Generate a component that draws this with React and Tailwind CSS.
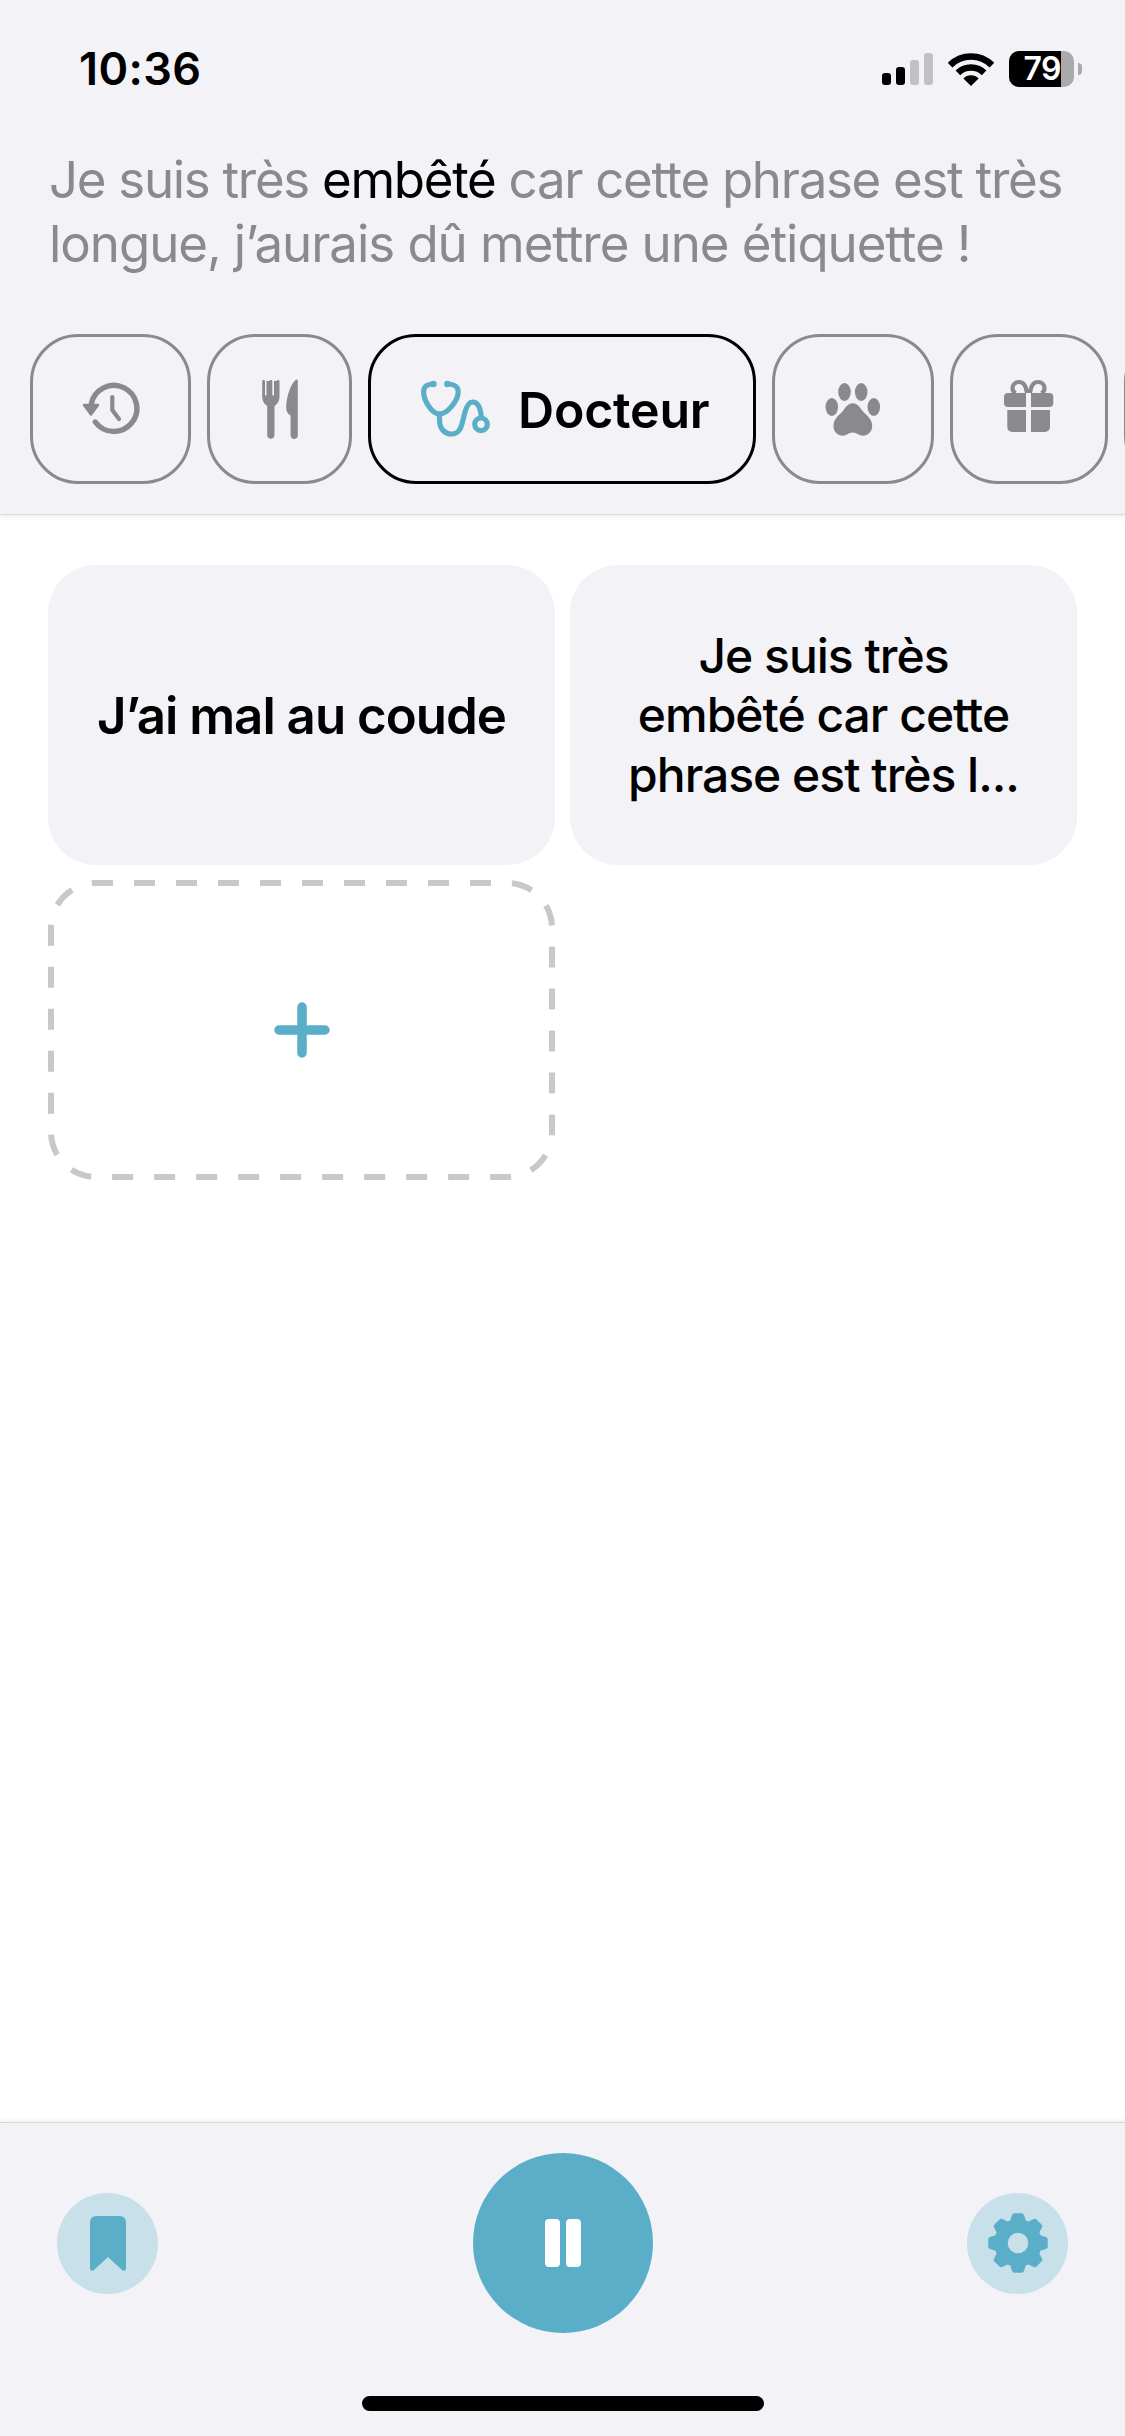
import React from "react";

const gearPoints = () => {
  const pts = [];
  for (let i = 0; i < 8; i++) {
    const a = (i * 45 - 90) * (Math.PI / 180);
    const offsets = [
      [21.5, -0.27],
      [27.5, -0.13],
      [27.5, 0.13],
      [21.5, 0.27],
    ];
    offsets.forEach(([r, d]) => {
      pts.push(
        `${(32 + r * Math.cos(a + d)).toFixed(2)},${(32 + r * Math.sin(a + d)).toFixed(2)}`
      );
    });
  }
  return pts.join(" ");
};

const HistoryIcon = () => (
  <svg width="60" height="60" viewBox="0 0 60 60" fill="none">
    <path
      d="M10.3 25 A23 23 0 1 1 14.3 43"
      stroke="#8a8a8e"
      strokeWidth="5.4"
      strokeLinecap="round"
    />
    <path
      d="M3 26 L17 26 L10 35.5 Z"
      fill="#8a8a8e"
      stroke="#8a8a8e"
      strokeWidth="2.5"
      strokeLinejoin="round"
    />
    <path
      d="M31.3 18 L31.3 31 L38 40"
      stroke="#8a8a8e"
      strokeWidth="4.2"
      strokeLinecap="round"
      strokeLinejoin="round"
    />
  </svg>
);

const ForkIcon = () => (
  <svg width="60" height="60" viewBox="0 0 60 60" fill="#8a8a8e">
    <path d="M12.2 2 C12.2 0.5 15 0.5 15 2 L15 16 C15 17 16.5 17 16.5 16 L16.5 2 L19.5 2 C19.5 0.5 22.3 0.5 22.3 2 L22.3 16 C22.3 17 24 17 24 16 L24 2 L26.7 2 C26.7 0.5 29.5 0.5 29.5 2 L29.5 17 C29.5 22 27.5 25 24.5 27 L24.5 56 C24.5 61 17.2 61 17.2 56 L17.2 27 C14 25 12.2 22 12.2 17 Z" />
    <path d="M47.8 2 L47.8 56.5 C47.8 61 40.6 61 40.6 56.5 L40.6 36.5 C38 35 36.2 32.5 36.2 29 C36.2 19 40 6 45.5 1 C46.5 0 47.8 0.5 47.8 2 Z" />
  </svg>
);

const StethoscopeIcon = () => (
  <svg width="76" height="60" viewBox="0 0 76 60" fill="none" stroke="#5aaec8" strokeWidth="5.2" strokeLinecap="round">
    <path d="M15.3 5 C9 5 5.6 8 5.6 12.5 C5.6 22 14 35 21.5 35 C29 35 40.2 22 40.2 12.5 C40.2 8 36.5 5 29.3 5" />
    <path d="M21.5 35 L21.5 41 C21.5 50 27 55 33.5 55 C44 55 44 43 47 33 C49 26 51 23 54.5 23 C60 23 62.5 28 63.3 38" />
    <circle cx="63" cy="45.3" r="6.3" />
    <circle cx="15.5" cy="5" r="3.2" fill="#5aaec8" stroke="none" />
    <circle cx="29.3" cy="5" r="3.2" fill="#5aaec8" stroke="none" />
  </svg>
);

const PawIcon = () => (
  <svg width="60" height="60" viewBox="0 0 60 60" fill="#8a8a8e">
    <ellipse cx="21.5" cy="13" rx="6.3" ry="9" />
    <ellipse cx="38.2" cy="13" rx="6.3" ry="9" />
    <ellipse cx="8.8" cy="28" rx="6.3" ry="9" />
    <ellipse cx="50.8" cy="28" rx="6.3" ry="9" />
    <path d="M29.8 24.3 C35 24.3 37 29 40 32.5 C44 36.5 49.2 40 49.2 47 C49.2 53 44.5 56.7 40 56.7 C36 56.7 33.5 53.5 29.8 53.5 C26 53.5 23.5 56.7 19.5 56.7 C15 56.7 10.5 53 10.5 47 C10.5 40 15.5 36.5 19.5 32.5 C22.5 29 24.5 24.3 29.8 24.3 Z" />
  </svg>
);

const GiftIcon = () => (
  <svg width="60" height="60" viewBox="0 0 60 60" fill="#8a8a8e">
    <path d="M5 18 a4 4 0 0 1 4 -4 H27 V28 H9 a4 4 0 0 1 -4 -4 Z" />
    <path d="M32 14 H50.3 a4 4 0 0 1 4 4 V24 a4 4 0 0 1 -4 4 H32 Z" />
    <path d="M8.3 31 H27 V53 H13.3 a5 5 0 0 1 -5 -5 Z" />
    <path d="M32 31 H51 V48 a5 5 0 0 1 -5 5 H32 Z" />
    <path
      d="M28 14 C27 6 24 3 20 3 C16 3 13.5 6 13.5 9 C13.5 12 15 13.5 17 14 M31 14 C32 6 35 3 39 3 C43 3 45.5 6 45.5 9 C45.5 12 44 13.5 42 14"
      fill="none"
      stroke="#8a8a8e"
      strokeWidth="4.2"
    />
  </svg>
);

const GearIcon = () => (
  <svg width="64" height="64" viewBox="0 0 64 64">
    <polygon
      points={gearPoints()}
      fill="#5aaec8"
      stroke="#5aaec8"
      strokeWidth="5"
      strokeLinejoin="round"
    />
    <circle cx="32" cy="32" r="10.3" fill="#c8e0ea" />
  </svg>
);

const TabIcon = ({ children, className }) => (
  <div
    className={`flex h-[150px] shrink-0 items-center justify-center rounded-[48px] border-[3px] border-[#8a8a8e] ${className}`}
  >
    {children}
  </div>
);

const App = () => {
  return (
    <div className="flex h-[2436px] w-[1125px] flex-col overflow-hidden bg-white font-[Inter,sans-serif] text-black">
      <header className="relative z-10 h-[515px] shrink-0 border-b border-[#dcdce0] bg-[#f2f2f7] shadow-[0_2px_5px_rgba(0,0,0,0.08)]">
        <div className="flex h-[148px] items-start justify-between pl-[79px] pr-[43px] pt-[47px]">
          <span className="text-[45px] font-semibold leading-[44px] tracking-[0.4px]">10:36</span>
          <div className="flex h-[44px] items-center">
            <svg width="51" height="32" viewBox="0 0 51 32" className="mr-[15px]">
              <rect x="0" y="20" width="9" height="12" rx="3" fill="#000" />
              <rect x="14" y="14" width="9" height="18" rx="3" fill="#000" />
              <rect x="28" y="7" width="9" height="25" rx="3" fill="#c0c0c5" />
              <rect x="42" y="0" width="9" height="32" rx="3" fill="#c0c0c5" />
            </svg>
            <svg width="46" height="33" viewBox="0 0 46 33" fill="none" className="mr-[15px]">
              <path d="M2.1 12.1 A29.5 29.5 0 0 1 43.9 12.1" stroke="#000" strokeWidth="6.5" />
              <path d="M9.9 19.9 A18.5 18.5 0 0 1 36.1 19.9" stroke="#000" strokeWidth="6.5" />
              <path d="M23 33 L15.4 25.4 A10.7 10.7 0 0 1 30.6 25.4 Z" fill="#000" />
            </svg>
            <div className="flex h-[36px] w-[65px] rounded-[10px] bg-[#aaaaaa]">
              <div className="flex h-full w-[52px] items-center justify-end rounded-l-[10px] bg-black">
                <span className="text-[32px] font-semibold leading-none tracking-[-0.5px] text-white">79</span>
              </div>
            </div>
            <div className="ml-[4px] h-[12px] w-[4px] rounded-r-full bg-[#aaaaaa]" />
          </div>
        </div>

        <p className="whitespace-nowrap pl-[49px] text-[51px] font-normal leading-[64px] tracking-[-1.3px] text-[#8a8a8e]">
          Je suis très <span className="text-black">embêté</span> car cette phrase est très
          <br />
          <span className="tracking-[-1.05px]">longue, j’aurais dû mettre une étiquette !</span>
        </p>

        <div className="mt-[58px] flex gap-4 overflow-hidden pl-[30px]">
          <TabIcon className="w-[161px]">
            <HistoryIcon />
          </TabIcon>
          <TabIcon className="w-[145px]">
            <ForkIcon />
          </TabIcon>
          <div className="flex h-[150px] w-[388px] shrink-0 items-center rounded-[48px] border-[3px] border-black pl-[47px]">
            <StethoscopeIcon />
            <span className="ml-[24px] pt-[1px] text-[50px] font-semibold leading-none tracking-[-0.2px]">Docteur</span>
          </div>
          <TabIcon className="w-[162px]">
            <PawIcon />
          </TabIcon>
          <TabIcon className="w-[158px]">
            <GiftIcon />
          </TabIcon>
          <TabIcon className="w-[100px]" />
        </div>
      </header>

      <main className="flex-1 px-[48px] pt-[50px]">
        <div className="grid grid-cols-[507px_507px] gap-[15px]">
          <div className="flex h-[300px] items-center justify-center rounded-[48px] bg-[#f2f2f7] pt-[1px] text-center text-[51px] font-semibold leading-[60px] tracking-[-1px]">
            J’ai mal au coude
          </div>
          <div className="flex h-[300px] items-center justify-center rounded-[48px] bg-[#f2f2f7] text-center text-[48px] font-medium leading-[59.5px] tracking-[-1px]">
            <span>
              Je suis très
              <br />
              embêté car cette
              <br />
              phrase est très l...
            </span>
          </div>
          <div className="relative flex h-[300px] items-center justify-center">
            <svg width="507" height="300" viewBox="0 0 507 300" fill="none" className="absolute inset-0">
              <rect
                x="3"
                y="3"
                width="501"
                height="294"
                rx="45"
                stroke="#c7c7cc"
                strokeWidth="6"
                strokeDasharray="21 21"
                strokeDashoffset="4"
              />
            </svg>
            <svg width="56" height="56" viewBox="0 0 56 56" fill="none">
              <path d="M28 5 V51 M5 28 H51" stroke="#5aaec8" strokeWidth="9.5" strokeLinecap="round" />
            </svg>
          </div>
        </div>
      </main>

      <footer className="relative h-[314px] shrink-0 border-t border-[#d8d8dc] bg-[#f2f2f7] shadow-[0_-2px_4px_rgba(0,0,0,0.06)]">
        <div className="flex items-center justify-between pl-[57px] pr-[57px] pt-[30px]">
          <button className="flex h-[101px] w-[101px] items-center justify-center rounded-full bg-[#c8e0ea]">
            <svg width="36" height="55" viewBox="0 0 36 55" fill="#5aaec8">
              <path d="M6 0 H30 a6 6 0 0 1 6 6 V52 C36 55 33.5 55.5 31.5 53.5 L18 41 L4.5 53.5 C2.5 55.5 0 55 0 52 V6 a6 6 0 0 1 6 -6 Z" />
            </svg>
          </button>
          <button className="flex h-[180px] w-[180px] items-center justify-center gap-[6px] rounded-full bg-[#5aaec8]">
            <span className="h-[48px] w-[15px] rounded-[4px] bg-white" />
            <span className="h-[48px] w-[15px] rounded-[4px] bg-white" />
          </button>
          <button className="flex h-[101px] w-[101px] items-center justify-center rounded-full bg-[#c8e0ea]">
            <GearIcon />
          </button>
        </div>
        <div className="mx-auto mt-[63px] h-[15px] w-[402px] rounded-full bg-black" />
      </footer>
    </div>
  );
};

export default App;
